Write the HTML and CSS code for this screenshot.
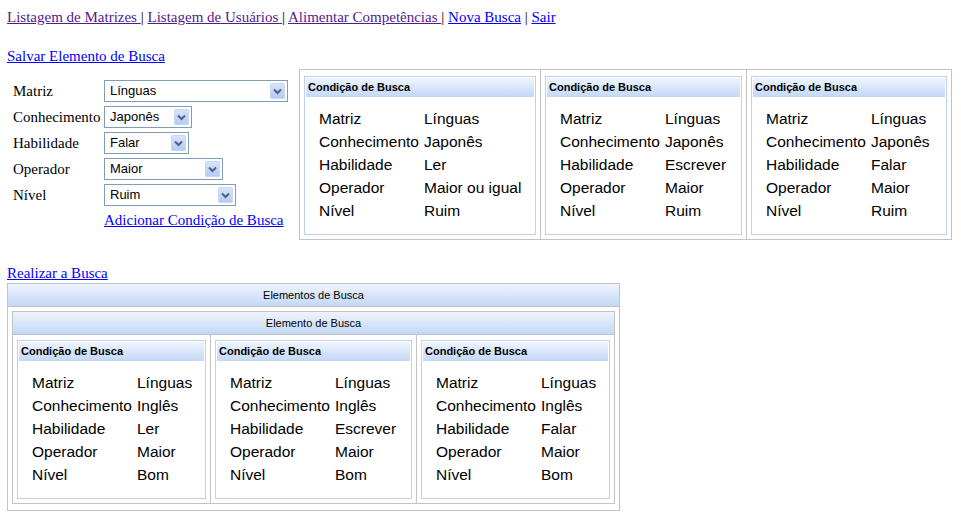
FILE: index.html
```html
<!DOCTYPE html>
<html lang="pt-BR">
<head>
<meta charset="utf-8">
<title>Busca de Competências</title>
<link rel="stylesheet" href="styles.css">
</head>
<body>
<nav class="nav"><a class="visited" href="#">Listagem de Matrizes </a>| <a class="visited" href="#">Listagem de Usuários </a>| <a class="visited" href="#">Alimentar Competências </a>| <a href="#">Nova Busca</a> | <a href="#">Sair</a></nav>

<p class="save"><a href="#">Salvar Elemento de Busca</a></p>

<div class="editor">
  <form class="form">
    <label class="lbl">Matriz</label>
    <span class="sel w184"><select><option>Línguas</option></select><svg class="btn" viewBox="0 0 15 16" width="15" height="16"><defs><linearGradient id="g1" x1="0" y1="0" x2="0" y2="1"><stop offset="0" stop-color="#d9e5fc"/><stop offset="1" stop-color="#b5c9f2"/></linearGradient></defs><rect x="0.5" y="0.5" width="14" height="15" rx="1" fill="url(#g1)" stroke="#c6d6f7"/><polyline points="4,6.5 7.5,10 11,6.5" fill="none" stroke="#4d5f84" stroke-width="2"/></svg></span>

    <label class="lbl">Conhecimento</label>
    <span class="sel w88"><select><option>Japonês</option></select><svg class="btn" viewBox="0 0 15 16" width="15" height="16"><rect x="0.5" y="0.5" width="14" height="15" rx="1" fill="url(#g1)" stroke="#c6d6f7"/><polyline points="4,6.5 7.5,10 11,6.5" fill="none" stroke="#4d5f84" stroke-width="2"/></svg></span>

    <label class="lbl">Habilidade</label>
    <span class="sel w85"><select><option>Falar</option></select><svg class="btn" viewBox="0 0 15 16" width="15" height="16"><rect x="0.5" y="0.5" width="14" height="15" rx="1" fill="url(#g1)" stroke="#c6d6f7"/><polyline points="4,6.5 7.5,10 11,6.5" fill="none" stroke="#4d5f84" stroke-width="2"/></svg></span>

    <label class="lbl">Operador</label>
    <span class="sel w119"><select><option>Maior</option></select><svg class="btn" viewBox="0 0 15 16" width="15" height="16"><rect x="0.5" y="0.5" width="14" height="15" rx="1" fill="url(#g1)" stroke="#c6d6f7"/><polyline points="4,6.5 7.5,10 11,6.5" fill="none" stroke="#4d5f84" stroke-width="2"/></svg></span>

    <label class="lbl">Nível</label>
    <span class="sel w132"><select><option>Ruim</option></select><svg class="btn" viewBox="0 0 15 16" width="15" height="16"><rect x="0.5" y="0.5" width="14" height="15" rx="1" fill="url(#g1)" stroke="#c6d6f7"/><polyline points="4,6.5 7.5,10 11,6.5" fill="none" stroke="#4d5f84" stroke-width="2"/></svg></span>

    <span class="lbl"></span>
    <a class="add" href="#">Adicionar Condição de Busca</a>
  </form>

  <div class="box">
    <div class="cell">
      <div class="panel w232">
        <div class="phead">Condição de Busca</div>
        <dl class="kv">
          <dt>Matriz</dt><dd>Línguas</dd>
          <dt>Conhecimento</dt><dd>Japonês</dd>
          <dt>Habilidade</dt><dd>Ler</dd>
          <dt>Operador</dt><dd>Maior ou igual</dd>
          <dt>Nível</dt><dd>Ruim</dd>
        </dl>
      </div>
    </div>
    <div class="cell">
      <div class="panel w197">
        <div class="phead">Condição de Busca</div>
        <dl class="kv">
          <dt>Matriz</dt><dd>Línguas</dd>
          <dt>Conhecimento</dt><dd>Japonês</dd>
          <dt>Habilidade</dt><dd>Escrever</dd>
          <dt>Operador</dt><dd>Maior</dd>
          <dt>Nível</dt><dd>Ruim</dd>
        </dl>
      </div>
    </div>
    <div class="cell">
      <div class="panel w196">
        <div class="phead">Condição de Busca</div>
        <dl class="kv">
          <dt>Matriz</dt><dd>Línguas</dd>
          <dt>Conhecimento</dt><dd>Japonês</dd>
          <dt>Habilidade</dt><dd>Falar</dd>
          <dt>Operador</dt><dd>Maior</dd>
          <dt>Nível</dt><dd>Ruim</dd>
        </dl>
      </div>
    </div>
  </div>
</div>

<p class="go"><a href="#">Realizar a Busca</a></p>

<div class="outer">
  <div class="bar">Elementos de Busca</div>
  <div class="outer-body">
    <div class="inner">
      <div class="bar">Elemento de Busca</div>
      <div class="row">
        <div class="cell">
          <div class="panel w189">
            <div class="phead">Condição de Busca</div>
            <dl class="kv">
              <dt>Matriz</dt><dd>Línguas</dd>
              <dt>Conhecimento</dt><dd>Inglês</dd>
              <dt>Habilidade</dt><dd>Ler</dd>
              <dt>Operador</dt><dd>Maior</dd>
              <dt>Nível</dt><dd>Bom</dd>
            </dl>
          </div>
        </div>
        <div class="cell">
          <div class="panel w197">
            <div class="phead">Condição de Busca</div>
            <dl class="kv">
              <dt>Matriz</dt><dd>Línguas</dd>
              <dt>Conhecimento</dt><dd>Inglês</dd>
              <dt>Habilidade</dt><dd>Escrever</dd>
              <dt>Operador</dt><dd>Maior</dd>
              <dt>Nível</dt><dd>Bom</dd>
            </dl>
          </div>
        </div>
        <div class="cell">
          <div class="panel w189">
            <div class="phead">Condição de Busca</div>
            <dl class="kv">
              <dt>Matriz</dt><dd>Línguas</dd>
              <dt>Conhecimento</dt><dd>Inglês</dd>
              <dt>Habilidade</dt><dd>Falar</dd>
              <dt>Operador</dt><dd>Maior</dd>
              <dt>Nível</dt><dd>Bom</dd>
            </dl>
          </div>
        </div>
      </div>
    </div>
  </div>
</div>
</body>
</html>
```

FILE: styles.css
```css
html, body {
  margin: 0;
  background: #ffffff;
}

body {
  padding: 8px 7px;
  font-family: "Liberation Serif", "Times New Roman", serif;
  font-size: 15px;
  line-height: 18px;
  color: #000000;
}

a {
  color: #0000ff;
  text-decoration: underline;
}

a.visited {
  color: #551a8b;
}

.nav {
  height: 18px;
  white-space: nowrap;
}

.save {
  margin: 21px 0 0;
}

/* ---- editor row ---- */
.editor {
  display: flex;
  align-items: center;
  margin-top: 4px;
}

.form {
  box-sizing: border-box;
  width: 292px;
  flex: none;
  padding-left: 6px;
  display: grid;
  grid-template-columns: 91px auto;
  grid-template-rows: repeat(5, 26px) 24px;
  align-items: center;
  margin: 0;
}

.lbl {
  white-space: nowrap;
}

.sel {
  position: relative;
  display: inline-block;
  height: 22px;
  justify-self: start;
}

.sel select {
  appearance: none;
  -webkit-appearance: none;
  box-sizing: border-box;
  display: block;
  width: 100%;
  height: 22px;
  margin: 0;
  padding: 0 0 0 5px;
  border: 1px solid #7f9db9;
  border-radius: 0;
  background: #ffffff;
  font-family: "Liberation Sans", Arial, sans-serif;
  font-size: 13px;
  color: #000000;
}

.sel .btn {
  position: absolute;
  right: 3px;
  top: 3px;
  pointer-events: none;
}

.w184 { width: 184px; }
.w88 { width: 88px; }
.w85 { width: 85px; }
.w119 { width: 119px; }
.w132 { width: 132px; }

.add {
  white-space: nowrap;
}

/* ---- boxes ---- */
.box {
  display: flex;
  border: 1px solid #c3c3c3;
}

.cell {
  padding: 6px 4px 4px;
}

.cell + .cell {
  border-left: 1px solid #c3c3c3;
}

.panel {
  box-sizing: border-box;
  border: 1px solid #bcd1ef;
  padding: 1px;
  background: #ffffff;
}

.w232 { width: 232px; }
.w197 { width: 197px; }
.w196 { width: 196px; }
.w189 { width: 189px; }

.phead {
  height: 19px;
  line-height: 18px;
  padding-left: 2px;
  background: linear-gradient(#eef4fd, #c3d8f6);
  font-family: "Liberation Sans", Arial, sans-serif;
  font-size: 11px;
  font-weight: bold;
  white-space: nowrap;
}

.kv {
  display: grid;
  grid-template-columns: 105px auto;
  grid-auto-rows: 23px;
  align-items: center;
  margin: 0;
  padding: 10px 0 11px 13px;
  font-family: "Liberation Sans", Arial, sans-serif;
  font-size: 15.5px;
  line-height: 18px;
  white-space: nowrap;
}

.kv dt,
.kv dd {
  margin: 0;
}

.go {
  margin: 24px 0 0;
}

.outer {
  margin-top: 1px;
  width: 613px;
  box-sizing: border-box;
  border: 1px solid #c3c3c3;
}

.bar {
  height: 22px;
  line-height: 22px;
  border-bottom: 1px solid #c3c3c3;
  background: linear-gradient(#eef4fd, #c3d8f6);
  text-align: center;
  font-family: "Liberation Sans", Arial, sans-serif;
  font-size: 11px;
}

.outer-body {
  padding: 4px 4px 6px;
}

.inner {
  border: 1px solid #c3c3c3;
}

.row {
  display: flex;
}

.row .cell {
  padding: 5px 4px 4px;
}
```
